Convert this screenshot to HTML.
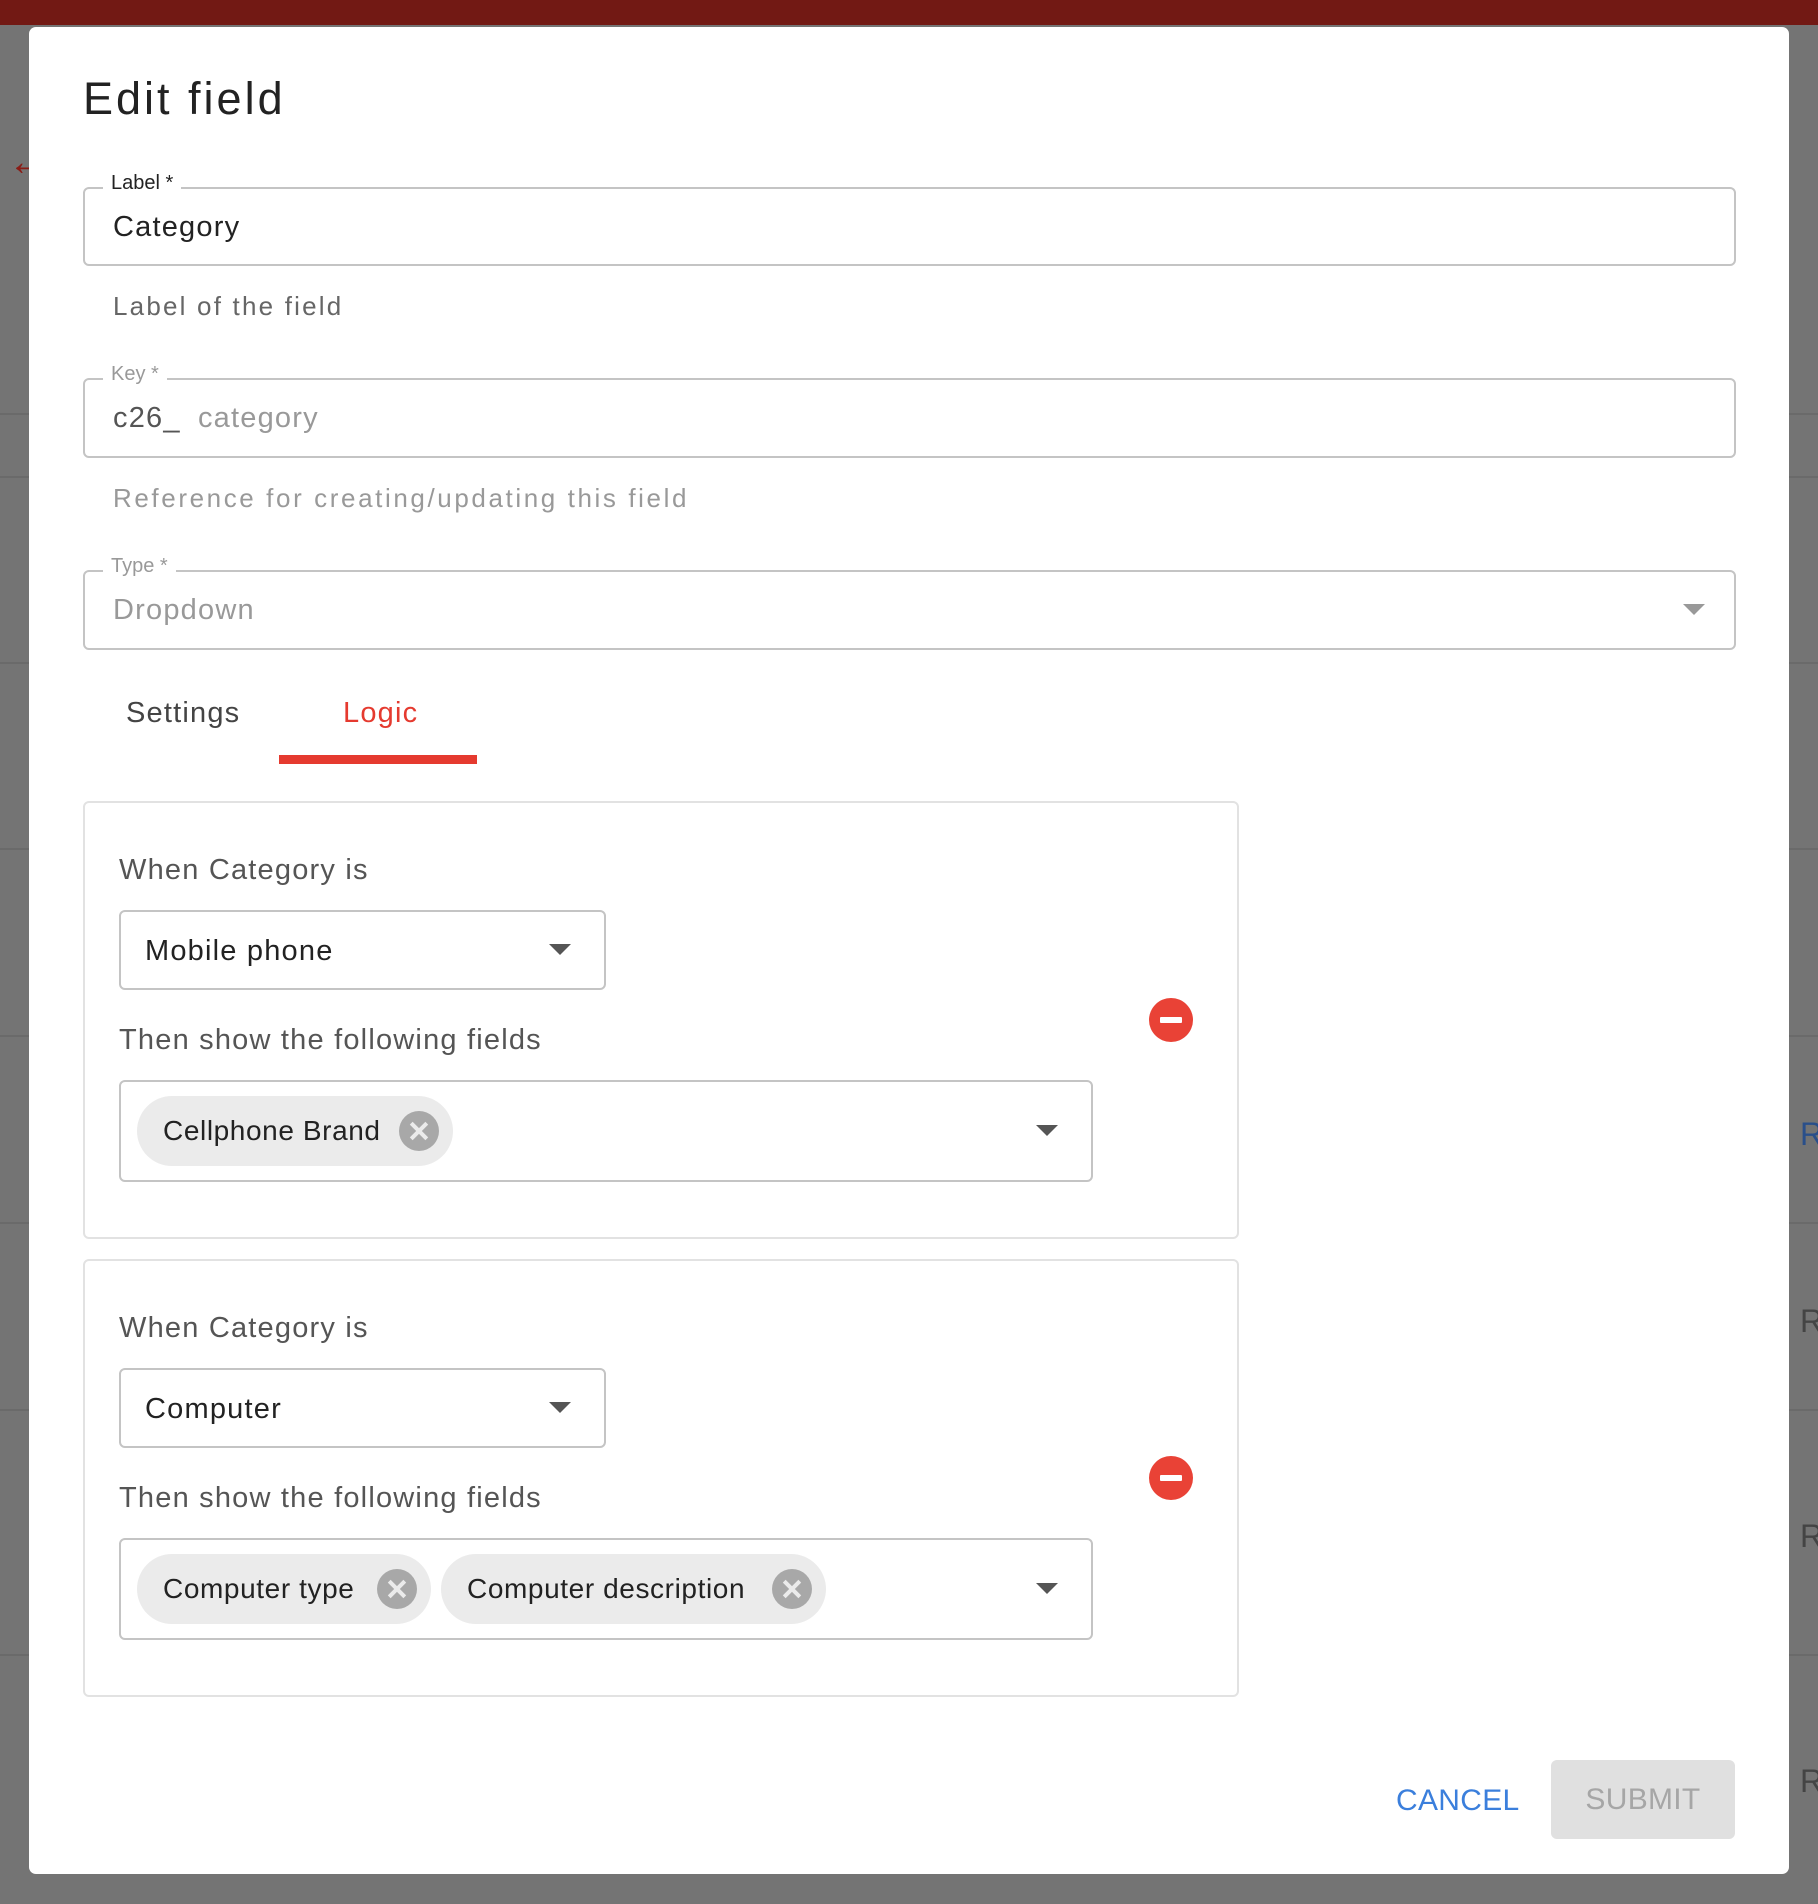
<!DOCTYPE html>
<html><head><meta charset="utf-8"><style>
*{box-sizing:border-box;margin:0;padding:0}
body{width:1818px;height:1904px;position:relative;overflow:hidden;background:#747474;font-family:"Liberation Sans",sans-serif;}
.a{position:absolute}
.bar{left:0;top:0;width:1818px;height:25px;background:#721914}
.hl{position:absolute;left:0;width:1818px;height:2px;background:#6a6a6a}
.dlg{left:29px;top:27px;width:1760px;height:1847px;background:#fff;border-radius:7px}
.fld{position:absolute;border:2px solid #c4c4c4;border-radius:6px}
.leg{position:absolute;background:#fff;padding:0 8px;font-size:20px;color:#222;line-height:22px}
.txt{position:absolute;white-space:nowrap}
.box{position:absolute;left:83px;width:1156px;height:438px;border:2px solid #e2e2e2;border-radius:6px}
.tri{position:absolute;width:0;height:0;border-left:11px solid transparent;border-right:11px solid transparent;border-top:11px solid #555}
.chip{position:absolute;height:70px;border-radius:35px;background:#ebebeb;font-size:28px;color:#222;line-height:70px;padding-left:26px;letter-spacing:0.6px}
.x{position:absolute;top:15px;right:14px;width:40px;height:40px;border-radius:50%;background:#a8a8a8}
.x:before,.x:after{content:"";position:absolute;left:9px;top:18px;width:22px;height:4px;background:#ebebeb;transform:rotate(45deg)}
.x:after{transform:rotate(-45deg)}
.minus{position:absolute;width:44px;height:44px;border-radius:50%;background:#e94236}
.minus:after{content:"";position:absolute;left:11px;top:19px;width:22px;height:6px;background:#fff;border-radius:1px}
.s{letter-spacing:1.2px}
</style></head><body>
<div class="a bar"></div>
<div class="hl" style="top:413px"></div><div class="hl" style="top:476px"></div><div class="hl" style="top:662px"></div><div class="hl" style="top:848px"></div><div class="hl" style="top:1035px"></div><div class="hl" style="top:1222px"></div><div class="hl" style="top:1409px"></div><div class="hl" style="top:1654px"></div>
<div class="txt" style="left:1800px;top:1116px;font-size:32px;color:#2a4f8a">R</div>
<div class="txt" style="left:1800px;top:1303px;font-size:32px;color:#444">R</div>
<div class="txt" style="left:1800px;top:1518px;font-size:32px;color:#444">R</div>
<div class="txt" style="left:1800px;top:1763px;font-size:32px;color:#444">R</div>
<div class="txt" style="left:8px;top:140px;font-size:40px;font-weight:bold;color:#8a1c16">←</div>
<div class="a dlg">
<div class="txt" style="left:54px;top:46px;font-size:45px;letter-spacing:3px;color:#222">Edit field</div>

<div class="fld" style="left:54px;top:160px;width:1653px;height:79px"></div>
<div class="leg" style="left:74px;top:145px">Label *</div>
<div class="txt s" style="left:84px;top:184px;font-size:29px;color:#222">Category</div>
<div class="txt" style="left:84px;top:264px;font-size:26px;letter-spacing:2.2px;color:#666">Label of the field</div>

<div class="fld" style="left:54px;top:351px;width:1653px;height:80px"></div>
<div class="leg" style="left:74px;top:336px;color:#999">Key *</div>
<div class="txt s" style="left:84px;top:375px;font-size:29px;color:#555">c26_ <span style="color:#999;margin-left:8px">category</span></div>
<div class="txt" style="left:84px;top:456px;font-size:26px;letter-spacing:2.6px;color:#999">Reference for creating/updating this field</div>

<div class="fld" style="left:54px;top:543px;width:1653px;height:80px"></div>
<div class="leg" style="left:74px;top:528px;color:#999">Type *</div>
<div class="txt s" style="left:84px;top:567px;font-size:29px;color:#999">Dropdown</div>
<div class="tri" style="left:1654px;top:577px;border-top-color:#999"></div>

<div class="txt s" style="left:97px;top:670px;font-size:29px;color:#444">Settings</div>
<div class="txt s" style="left:314px;top:670px;font-size:29px;color:#e53a2f">Logic</div>
<div class="a" style="left:250px;top:728px;width:198px;height:9px;background:#e53a2f"></div>

<div class="box" style="left:54px;top:774px"></div>
<div class="txt s" style="left:90px;top:827px;font-size:29px;color:#555">When Category is</div>
<div class="fld" style="left:90px;top:883px;width:487px;height:80px"></div>
<div class="txt s" style="left:116px;top:908px;font-size:29px;color:#222">Mobile phone</div>
<div class="tri" style="left:520px;top:917px"></div>
<div class="minus" style="left:1120px;top:971px"></div>
<div class="txt s" style="left:90px;top:997px;font-size:29px;color:#555">Then show the following fields</div>
<div class="fld" style="left:90px;top:1053px;width:974px;height:102px"></div>
<div class="chip" style="left:108px;top:1069px;width:316px">Cellphone Brand<div class="x"></div></div>
<div class="tri" style="left:1007px;top:1098px"></div>

<div class="box" style="left:54px;top:1232px"></div>
<div class="txt s" style="left:90px;top:1285px;font-size:29px;color:#555">When Category is</div>
<div class="fld" style="left:90px;top:1341px;width:487px;height:80px"></div>
<div class="txt s" style="left:116px;top:1366px;font-size:29px;color:#222">Computer</div>
<div class="tri" style="left:520px;top:1375px"></div>
<div class="minus" style="left:1120px;top:1429px"></div>
<div class="txt s" style="left:90px;top:1455px;font-size:29px;color:#555">Then show the following fields</div>
<div class="fld" style="left:90px;top:1511px;width:974px;height:102px"></div>
<div class="chip" style="left:108px;top:1527px;width:294px">Computer type<div class="x"></div></div>
<div class="chip" style="left:412px;top:1527px;width:385px">Computer description<div class="x"></div></div>
<div class="tri" style="left:1007px;top:1556px"></div>

<div class="txt" style="left:1367px;top:1757px;font-size:30px;color:#3b7fdc;letter-spacing:0.3px">CANCEL</div>
<div class="a" style="left:1522px;top:1733px;width:184px;height:79px;background:#e0e0e0;border-radius:6px;font-size:30px;color:#a6a6a6;text-align:center;line-height:79px;letter-spacing:0.3px">SUBMIT</div>
</div>
</body></html>
